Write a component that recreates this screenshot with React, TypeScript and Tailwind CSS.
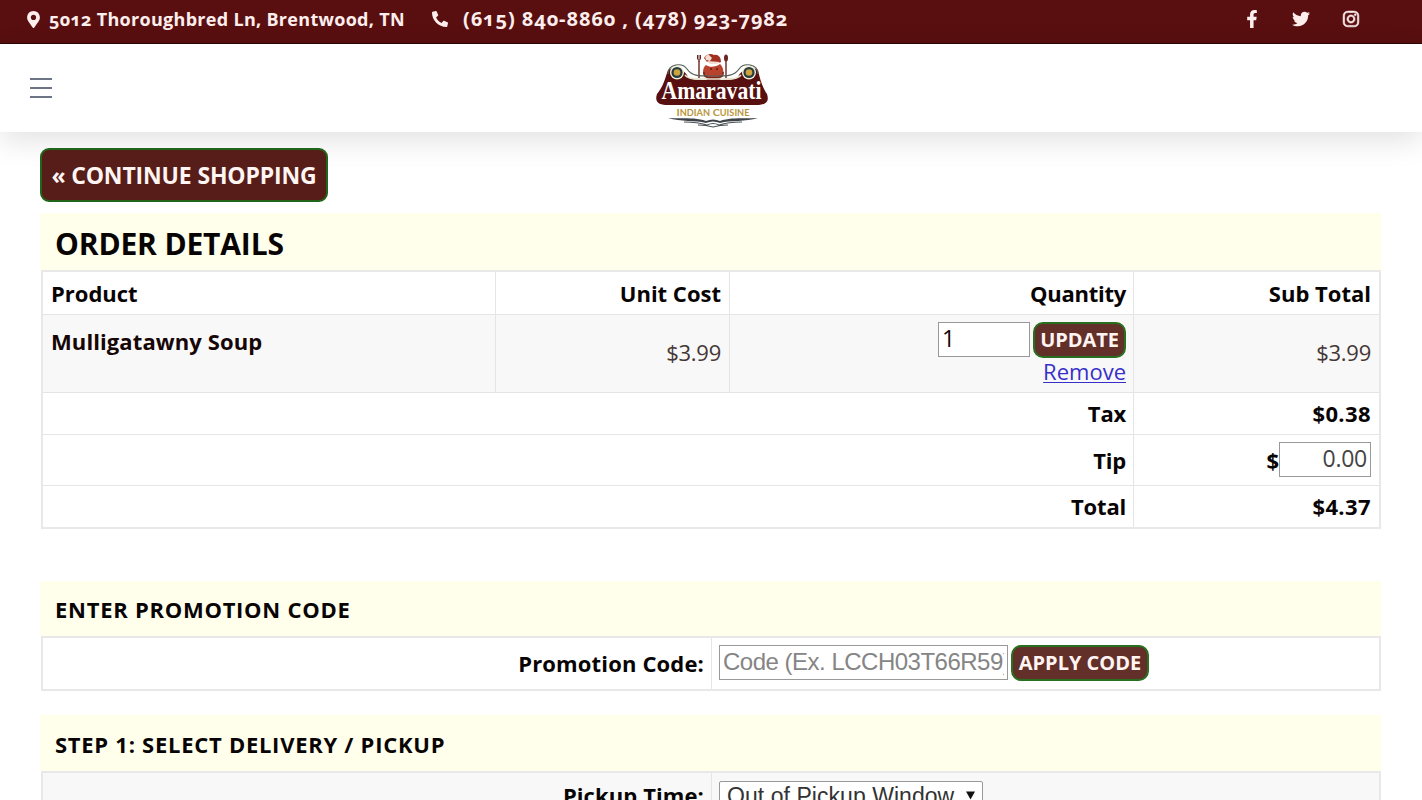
import type { ReactNode } from "react";
import { FaFacebookF, FaInstagram, FaMapMarkerAlt, FaPhone, FaTwitter } from "react-icons/fa";

function Logo() {
  return (
    <svg width="116" height="82" viewBox="0 0 116 82" className="overflow-visible" aria-label="Amaravati Indian Cuisine">
      {/* cook with fork and spoon */}
      <path d="M52 13 C48 16 48 23 53 26 L66 26 C71 22 70 16 66 12 C62 15 56 16 52 13Z" fill="#b8432c" />
      <path d="M50 6 C52 2 57 1 60 3 C64 2 67 5 67 10 L65 11 L53 10Z" fill="#a33123" />
      <path d="M51 5 L54 2 L58 6 L56 9 L52 8Z M53 9 L66 10 L63 12 L56 12Z" fill="#f3dcd0" />
      <path d="M50 20 Q49 25 54 25 M69 20 Q70 25 65 25 M56 17 h2 M62 17 h2" stroke="#6c1712" strokeWidth="1.4" fill="none" />
      <path d="M55 25 L52 28 H67 L64 25Z" fill="#7d2118" />
      <path d="M45 9 V26 M72 9 V26" stroke="#6b2720" strokeWidth="1.4" />
      <path d="M43.500 3 V7 Q45 10 46.500 7 V3 M45 3 V10" stroke="#6b2720" strokeWidth="1" fill="none" />
      <ellipse cx="72" cy="6" rx="2" ry="3.500" fill="#6b2720" />

      {/* banner */}
      <path
        d="M14 18 C19 14 31 17 34 25 C36 28 45 28 59 28 C73 28 82 28 84 25 C87 17 99 14 104 18 C106 28 109 36 113 42 C116 51 110 53 102 53 L14 53 C6 53 0 51 3 42 C9 35 11 27 14 18Z"
        fill="#57100f"
      />
      <path d="M14 22 C14 12 28 10 33 17 C38 24 43 24 59 24 C75 24 80 24 85 17 C90 10 104 12 104 22" stroke="#55605a" strokeWidth="1.2" fill="none" />
      <path d="M31 23 C35 28 45 27 59 27 C73 27 83 28 87 23" stroke="#e9e4cf" strokeWidth="1.6" fill="none" />
      <circle cx="23" cy="20.500" r="7" fill="#f4efd9" />
      <circle cx="95" cy="20.500" r="7" fill="#f4efd9" />
      <circle cx="23" cy="20.500" r="5.600" fill="#263c41" />
      <circle cx="95" cy="20.500" r="5.600" fill="#263c41" />
      <circle cx="23" cy="20.500" r="3.300" fill="#d0a43c" />
      <circle cx="95" cy="20.500" r="3.300" fill="#d0a43c" />
      <text x="7.500" y="47" fontFamily="Liberation Serif, serif" fontWeight="700" fontSize="25" fill="#fff" textLength="100" lengthAdjust="spacingAndGlyphs">
        Amaravati
      </text>
      <text x="22.500" y="64" fontFamily="Lato, sans-serif" fontWeight="700" fontSize="10" fill="#b8963b" textLength="73" lengthAdjust="spacingAndGlyphs">
        I<tspan fontSize="8.500">NDIAN</tspan> C<tspan fontSize="8.500">UISINE</tspan>
      </text>
      <path d="M14 66 C26 67 41 65 52 69 Q59 66 66 69 C77 65 91 67 104 66 C91 70 77 68 66 71 Q59 68 52 71 C41 68 27 70 14 66Z" fill="#3d4348" />
      <path d="M30 70 Q44 70 53 73 Q59 70 65 73 Q74 70 88 70 M44 73 Q52 73 59 75 Q66 73 74 73" stroke="#4c5357" strokeWidth="1.1" fill="none" />
    </svg>
  );
}

function TopBar() {
  return (
    <div className="flex h-11 justify-between border-b border-[#2f0505] bg-[#590f0f] pr-[62px] pl-[27px] font-['Open_Sans',sans-serif] text-lg leading-[38px] font-bold text-[#fdeeed]">
      <div className="flex">
        <FaMapMarkerAlt className="mt-[11px] h-[17px] w-[13px]" />
        <span className="ml-[9px] w-[355px] whitespace-nowrap tracking-[0.3px] [font-feature-settings:'onum']">5012 Thoroughbred Ln, Brentwood, TN</span>
        <FaPhone className="mt-[11px] ml-[28px] size-[16px] -scale-x-100" />
        <span className="ml-[15px] text-xl leading-[37px] whitespace-nowrap tracking-[0.9px] [font-feature-settings:'onum']">(615) 840-8860 , (478) 923-7982</span>
      </div>
      <div className="flex pt-[10px]">
        <FaFacebookF className="mr-[34px] h-[18px] w-[12px]" />
        <FaTwitter className="mr-[32px] size-[18px]" />
        <FaInstagram className="size-[18px]" stroke="currentColor" strokeWidth="18" />
      </div>
    </div>
  );
}

function NavBar() {
  return (
    <header className="relative z-10 flex h-[88px] items-center bg-white shadow-[0_8px_30px_rgba(0,0,0,0.12)]">
      <button aria-label="Menu" className="ml-[30px] flex w-[22px] flex-col gap-[7px]">
        <span className="h-[2px] bg-[#6b7585]" />
        <span className="h-[2px] bg-[#6b7585]" />
        <span className="h-[2px] bg-[#6b7585]" />
      </button>
      <div className="ml-[602px] pt-[10px]">
        <Logo />
      </div>
    </header>
  );
}

function SmallButton({ children, className }: { children: ReactNode; className: string }) {
  return (
    <button className={`h-[36px] rounded-[10px] border-2 border-[#28701f] bg-[#632f29] font-['Open_Sans',sans-serif] text-xl leading-[30px] font-bold whitespace-nowrap text-[#fff4f2] ${className}`}>
      {children}
    </button>
  );
}

const summary = [
  { label: "Tax", value: "$0.38", row: "h-[42px]" },
  { label: "Tip", value: null, row: "h-[51px]" },
  { label: "Total", value: "$4.37", row: "h-[41px]" },
];

function OrderTable() {
  return (
    <div className="border-2 border-[#e8e8e8] font-bold">
      <div className="grid h-[43px] grid-cols-[453px_234px_404px_1fr] items-stretch border-b border-[#e5e5e5] leading-[43px]">
        <div className="border-r border-[#e5e5e5] pl-[8px]">Product</div>
        <div className="border-r border-[#e5e5e5] pr-[8px] text-right">Unit Cost</div>
        <div className="border-r border-[#e5e5e5] pr-[7px] text-right tracking-[-0.25px]">Quantity</div>
        <div className="pr-[8px] text-right">Sub Total</div>
      </div>
      <div className="grid h-[78px] grid-cols-[453px_234px_404px_1fr] border-b border-[#e5e5e5] bg-[#f8f8f8] text-[#160606]">
        <div className="border-r border-[#e5e5e5] pl-[8px] leading-[52px] tracking-[0.1px]">Mulligatawny Soup</div>
        <div className="border-r border-[#e5e5e5] pr-[8px] text-right leading-[75px] font-normal tracking-[-0.25px] text-[#443735]">$3.99</div>
        <div className="flex flex-col items-end border-r border-[#e5e5e5] pt-[7px] pr-[7px]">
          <div className="flex">
            <input defaultValue="1" className="h-[35px] w-[92px] border border-[#999] bg-white px-[3px] pb-[4px] text-[23px] font-normal" />
            <SmallButton className="ml-[3px] w-[93px] tracking-[-0.1px]">UPDATE</SmallButton>
          </div>
          <a href="#" className="leading-[27px] font-normal text-[#3730c8] underline decoration-1 underline-offset-2">Remove</a>
        </div>
        <div className="pr-[8px] text-right leading-[75px] font-normal tracking-[-0.25px] text-[#443735]">$3.99</div>
      </div>
      {summary.map((item) => (
        <div key={item.label} className={`grid grid-cols-[1091px_1fr] border-[#e5e5e5] not-last:border-b ${item.row}`}>
          <div className="flex items-center justify-end border-r border-[#e5e5e5] pr-[7px] tracking-[-0.2px]">{item.label}</div>
          <div className="flex items-center justify-end pr-[8px] tracking-[0.4px]">
            {item.value ?? (
              <>
                <span className="tracking-normal">$</span>
                <input defaultValue="0.00" className="mb-px h-[35px] w-[92px] border border-[#999] bg-white px-[3px] pb-[3px] text-right text-[23px] font-normal tracking-[-0.25px] text-[#444]" />
              </>
            )}
          </div>
        </div>
      ))}
    </div>
  );
}

export default function App() {
  return (
    <div className="h-[800px] w-[1422px] overflow-hidden bg-white font-['Open_Sans','Noto_Sans',sans-serif] text-[22px] text-[#080404]">
      <TopBar />
      <NavBar />
      <main className="relative z-20 ml-[41px] w-[1340px] pt-[16px]">
        <button className="-ml-px block h-[54px] w-[288px] rounded-[9px] border-2 border-[#21651b] bg-[#571d18] text-[23px] font-bold tracking-[-0.15px] whitespace-nowrap text-[#fff5f2]">
          « CONTINUE SHOPPING
        </button>

        <h1 className="mt-[11px] -ml-px h-[57px] bg-[#ffffec] pl-[15px] text-[30px] leading-[62px] font-bold tracking-[-0.15px]">ORDER DETAILS</h1>
        <OrderTable />

        <h2 className="mt-[52px] -ml-px h-[55px] bg-[#ffffec] pl-[15px] leading-[57px] font-bold tracking-[0.73px]">ENTER PROMOTION CODE</h2>
        <div className="grid h-[55px] grid-cols-[669px_1fr] border-2 border-[#e8e8e8]">
          <label className="border-r border-[#e5e5e5] pr-[7px] text-right leading-[51px] font-bold tracking-[0.15px]">Promotion Code:</label>
          <div className="flex pt-[7px] pl-[7px]">
            <input
              placeholder="Code (Ex. LCCH03T66R59)"
              className="h-[35px] w-[289px] border border-[#999] pr-[3px] pb-[2px] pl-[3px] font-['Liberation_Sans',sans-serif] text-2xl tracking-[-0.5px] placeholder:text-[#858585]"
            />
            <SmallButton className="ml-[3px] w-[138px]">APPLY CODE</SmallButton>
          </div>
        </div>

        <h2 className="mt-[24px] -ml-px h-[56px] bg-[#ffffec] pl-[15px] leading-[59px] font-bold tracking-[0.73px]">STEP 1: SELECT DELIVERY / PICKUP</h2>
        <div className="grid h-[60px] grid-cols-[669px_1fr] border-2 border-[#e8e8e8] bg-[#f8f8f8]">
          <label className="border-r border-[#e5e5e5] pr-[7px] text-right leading-[44px] font-bold tracking-[0.1px]">Pickup Time:</label>
          <div className="pt-[8px] pl-[7px]">
            <button className="flex h-[35px] w-[264px] items-center justify-between rounded-[2px] border border-[#999] bg-white px-[7px] pb-[6px] font-['Liberation_Sans',sans-serif] text-[23px] leading-[28px] tracking-[0.05px] whitespace-nowrap text-[#333]">
              Out of Pickup Window
              <svg width="9" height="9" viewBox="0 0 10 9">
                <path d="M0 0 H10 L5 9Z" fill="#111" />
              </svg>
            </button>
          </div>
        </div>
      </main>
    </div>
  );
}
